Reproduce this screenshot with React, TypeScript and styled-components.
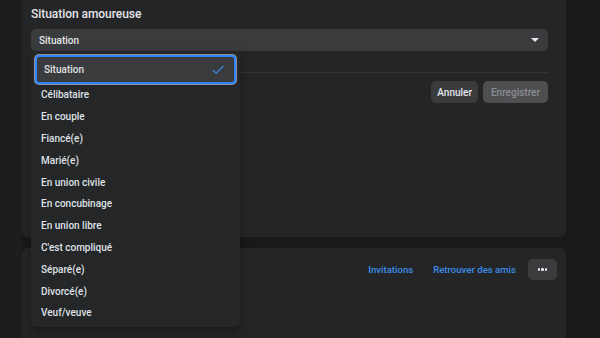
import styled, { createGlobalStyle } from "styled-components";

const Global = createGlobalStyle`
  html, body {
    margin: 0;
    padding: 0;
    background: #18191a;
    font-family: "Roboto", "Liberation Sans", sans-serif;
    color: #e4e6eb;
  }
  * { box-sizing: border-box; }
`;

// page frame: left rail, content column, right rail
const Page = styled.div`
  display: flex;
  width: 600px;
  height: 338px;
  overflow: hidden;
`;
const LeftRail = styled.div`
  width: 22px;
  flex-shrink: 0;
  background: #1c1d1f;
`;
const Column = styled.div`
  width: 544px;
  display: flex;
  flex-direction: column;
  gap: 11px;
`;
const RightRail = styled.div`
  flex: 1;
  background: #18191a;
`;

const Card = styled.div<{ $h?: number }>`
  background: #242526;
  border-radius: 0 0 6px 6px;
  height: ${(p) => (p.$h ? p.$h + "px" : "auto")};
  padding: 0 18px 0 9px;
  position: relative;
`;
const LowerCard = styled(Card)`
  flex: 1;
  border-radius: 6px 6px 0 0;
  padding: 11px 9px 0 9px;
`;

const Title = styled.h2`
  margin: 0;
  padding-top: 7px;
  height: 29px;
  font-size: 12px;
  font-weight: 500;
  letter-spacing: -0.05px;
`;

const SelectWrap = styled.div`
  position: relative;
`;
const Select = styled.div`
  height: 22px;
  background: #3a3b3c;
  border-radius: 5px;
  display: flex;
  align-items: center;
  justify-content: space-between;
  padding: 0 9px 0 8px;
  font-size: 10px;
  font-weight: 500;
`;
const Caret = styled.span`
  width: 0;
  height: 0;
  border-left: 4px solid transparent;
  border-right: 4px solid transparent;
  border-top: 4px solid #e4e6eb;
`;

const Divider = styled.div`
  height: 1px;
  background: #333435;
  margin-top: 21px;
`;

const Actions = styled.div`
  display: flex;
  justify-content: flex-end;
  gap: 5px;
  margin-top: 8px;
`;
const Button = styled.button<{ $disabled?: boolean }>`
  height: 22px;
  border: none;
  border-radius: 5px;
  padding: 0 ${(p) => (p.$disabled ? "8px" : "6px")};
  font-family: inherit;
  font-size: 10px;
  font-weight: 500;
  background: ${(p) => (p.$disabled ? "#4e4f50" : "#3a3b3c")};
  color: ${(p) => (p.$disabled ? "#8a8d91" : "#e4e6eb")};
`;

// open dropdown list
const Menu = styled.ul`
  position: absolute;
  top: 23px;
  left: 0;
  width: 209px;
  margin: 0;
  padding: 3px 4px 3px 4px;
  list-style: none;
  background: #252628;
  border-radius: 0 0 6px 6px;
  box-shadow: 0 4px 10px rgba(0, 0, 0, 0.35);
  z-index: 2;
`;
const Option = styled.li<{ $active?: boolean }>`
  height: ${(p) => (p.$active ? "29px" : "21.8px")};
  display: flex;
  align-items: center;
  justify-content: space-between;
  padding: 0 10px 0 ${(p) => (p.$active ? "7px" : "6px")};
  font-size: 10px;
  font-weight: 500;
  color: #dfe1e6;
  border-radius: 4px;
  background: ${(p) => (p.$active ? "#3a3b3c" : "transparent")};
  border: ${(p) => (p.$active ? "2px solid #2d86ff" : "none")};
  box-shadow: ${(p) => (p.$active ? "0 0 0 1px rgba(255,255,255,0.5)" : "none")};
`;
const Check = () => (
  <svg width="12" height="10" viewBox="0 0 12 10" fill="none">
    <path d="M1 5.2 L4.3 8.2 L11 1.2" stroke="#3b82d6" strokeWidth="1.3" strokeLinecap="round" strokeLinejoin="round" />
  </svg>
);

const Toolbar = styled.div`
  display: flex;
  justify-content: flex-end;
  align-items: center;
  gap: 20px;
`;
const Link = styled.a`
  font-size: 9.6px;
  font-weight: 500;
  color: #3b8de8;
  text-decoration: none;
`;
const MoreButton = styled.button`
  width: 29px;
  height: 21px;
  border: none;
  border-radius: 5px;
  background: #3a3b3c;
  display: flex;
  align-items: center;
  justify-content: center;
  gap: 1.5px;
  margin-left: -8px;
`;
const Dot = styled.span`
  width: 2.2px;
  height: 2.2px;
  border-radius: 50%;
  background: #e4e6eb;
`;

const options = [
  "Situation",
  "Célibataire",
  "En couple",
  "Fiancé(e)",
  "Marié(e)",
  "En union civile",
  "En concubinage",
  "En union libre",
  "C'est compliqué",
  "Séparé(e)",
  "Divorcé(e)",
  "Veuf/veuve",
];

export default function App() {
  return (
    <>
      <Global />
      <Page>
        <LeftRail />
        <Column>
          <Card $h={237}>
            <Title>Situation amoureuse</Title>
            <SelectWrap>
              <Select>
                <span>Situation</span>
                <Caret />
              </Select>
              <Menu>
                {options.map((o, i) => (
                  <Option key={o} $active={i === 0}>
                    <span>{o}</span>
                    {i === 0 && <Check />}
                  </Option>
                ))}
              </Menu>
            </SelectWrap>
            <Divider />
            <Actions>
              <Button>Annuler</Button>
              <Button $disabled>Enregistrer</Button>
            </Actions>
          </Card>
          <LowerCard>
            <Toolbar>
              <Link>Invitations</Link>
              <Link>Retrouver des amis</Link>
              <MoreButton>
                <Dot />
                <Dot />
                <Dot />
              </MoreButton>
            </Toolbar>
          </LowerCard>
        </Column>
        <RightRail />
      </Page>
    </>
  );
}
